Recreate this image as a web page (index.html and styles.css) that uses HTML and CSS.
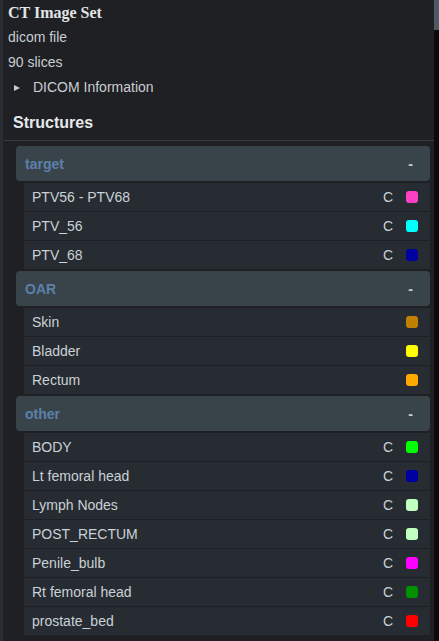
FILE: index.html
```html
<!DOCTYPE html>
<html>
<head>
<meta charset="utf-8">
<link rel="stylesheet" href="styles.css">
</head>
<body>
<div class="app">
  <div class="edge"></div>
  <main class="panel">
    <div class="info">
      <div class="title">CT Image Set</div>
      <div class="line">dicom file</div>
      <div class="line">90 slices</div>
      <div class="line disclosure"><span class="tri"></span><span>DICOM Information</span></div>
    </div>
    <h2 class="heading">Structures</h2>
    <div class="divider"></div>
    <div class="groups">
      <section class="group">
        <div class="ghead"><span class="gname">target</span><span class="gtoggle">-</span></div>
        <div class="row"><span class="name">PTV56 - PTV68</span><span class="c">C</span><span class="sw" style="background:#ff40c4"></span></div>
        <div class="row"><span class="name">PTV_56</span><span class="c">C</span><span class="sw" style="background:#00ffff"></span></div>
        <div class="row"><span class="name">PTV_68</span><span class="c">C</span><span class="sw" style="background:#0000a0"></span></div>
      </section>
      <section class="group">
        <div class="ghead"><span class="gname">OAR</span><span class="gtoggle">-</span></div>
        <div class="row"><span class="name">Skin</span><span class="sw" style="background:#c08000"></span></div>
        <div class="row"><span class="name">Bladder</span><span class="sw" style="background:#ffff00"></span></div>
        <div class="row"><span class="name">Rectum</span><span class="sw" style="background:#ffa800"></span></div>
      </section>
      <section class="group">
        <div class="ghead"><span class="gname">other</span><span class="gtoggle">-</span></div>
        <div class="row"><span class="name">BODY</span><span class="c">C</span><span class="sw" style="background:#00ff00"></span></div>
        <div class="row"><span class="name">Lt femoral head</span><span class="c">C</span><span class="sw" style="background:#0000a0"></span></div>
        <div class="row"><span class="name">Lymph Nodes</span><span class="c">C</span><span class="sw" style="background:#c0ffc0"></span></div>
        <div class="row"><span class="name">POST_RECTUM</span><span class="c">C</span><span class="sw" style="background:#c0ffc0"></span></div>
        <div class="row"><span class="name">Penile_bulb</span><span class="c">C</span><span class="sw" style="background:#ff00ff"></span></div>
        <div class="row"><span class="name">Rt femoral head</span><span class="c">C</span><span class="sw" style="background:#009000"></span></div>
        <div class="row"><span class="name">prostate_bed</span><span class="c">C</span><span class="sw" style="background:#ff0000"></span></div>
      </section>
    </div>
  </main>
  <div class="scrollbar"><div class="thumb"></div></div>
</div>
</body>
</html>
```

FILE: styles.css
```css
html, body {
  margin: 0;
  padding: 0;
  background: #1e2023;
}
body {
  font-family: "Liberation Sans", Arial, sans-serif;
  color: #cdd3d8;
  font-size: 14px;
}
.app {
  display: flex;
  height: 641px;
  width: 439px;
  overflow: hidden;
}
.edge {
  width: 3px;
  flex: none;
  background: #2a2e32;
}
.panel {
  flex: 1;
  min-width: 0;
  display: flex;
  flex-direction: column;
}
.info {
  padding-left: 5px;
}
.title {
  font-family: "Liberation Serif", "Times New Roman", serif;
  font-weight: bold;
  font-size: 16px;
  line-height: 25px;
  color: #e2e4e6;
}
.line {
  line-height: 25px;
  color: #c9ced3;
}
.disclosure {
  display: flex;
  align-items: center;
  padding-left: 6px;
}
.tri {
  width: 0;
  height: 0;
  border-top: 3.5px solid transparent;
  border-bottom: 3.5px solid transparent;
  border-left: 6px solid #c9ced3;
  margin-right: 13px;
}
.heading {
  margin: 11px 0 0 10px;
  font-size: 16px;
  line-height: 24px;
  font-weight: bold;
  color: #e6e8ea;
}
.divider {
  height: 1px;
  background: #363b40;
  margin-top: 5px;
  margin-left: 1px;
}
.groups {
  padding: 5px 4px 0 13px;
  display: flex;
  flex-direction: column;
}
.group {
  display: flex;
  flex-direction: column;
  margin-bottom: 1px;
}
.ghead {
  height: 35px;
  display: flex;
  align-items: center;
  justify-content: space-between;
  padding: 0 17px 0 9px;
  background: #39444a;
  border-radius: 4px;
  margin-bottom: 2px;
}
.gname {
  font-weight: bold;
  color: #5b80a9;
}
.gtoggle {
  font-weight: bold;
  color: #c9d0d5;
}
.row {
  height: 28px;
  margin: 0 0 1px 8px;
  background: #262c31;
  display: flex;
  align-items: center;
  padding: 0 12px 0 8px;
  color: #cad1d7;
}
.name {
  flex: 1;
}
.c {
  margin-right: 13px;
}
.sw {
  width: 12px;
  height: 12px;
  border-radius: 3px;
  flex: none;
}
.scrollbar {
  width: 5px;
  flex: none;
  background: #0b0b0c;
}
.thumb {
  height: 30px;
  background: #4b5a63;
}
```
